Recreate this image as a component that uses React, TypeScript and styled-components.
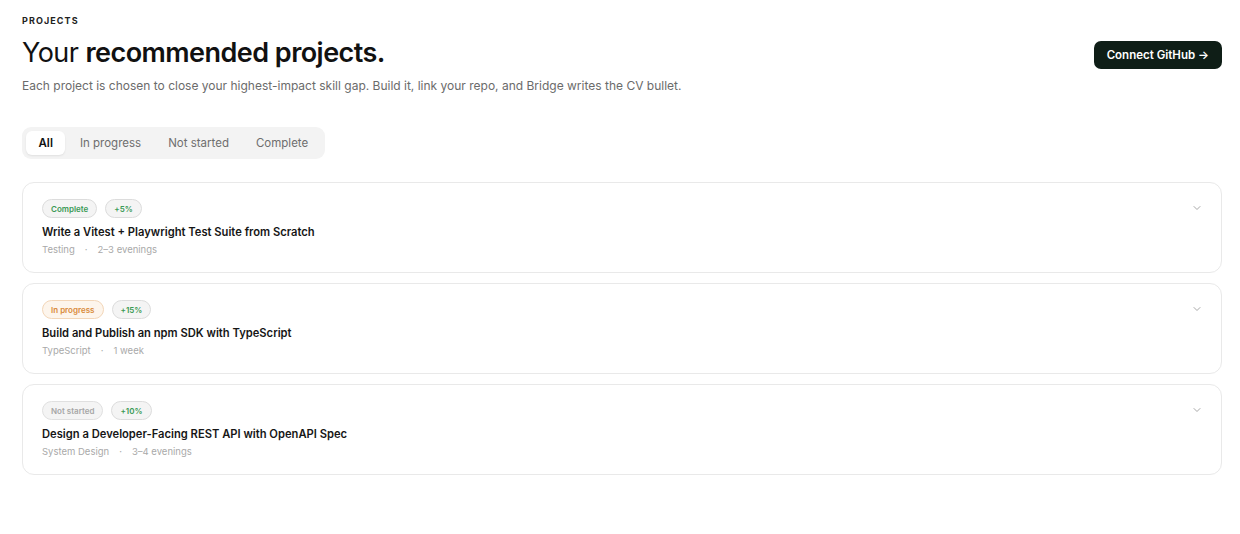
import React, { useState } from "react";
import styled, { createGlobalStyle } from "styled-components";

const GlobalStyle = createGlobalStyle`
  * { box-sizing: border-box; }
  body {
    margin: 0;
    background: #ffffff;
    font-family: Inter, "Noto Sans", sans-serif;
    color: #111;
  }
`;

type Status = "complete" | "progress" | "notStarted";

type Project = {
  title: string;
  status: Status;
  gain: string;
  area: string;
  effort: string;
};

const projects: Project[] = [
  {
    title: "Write a Vitest + Playwright Test Suite from Scratch",
    status: "complete",
    gain: "+5%",
    area: "Testing",
    effort: "2–3 evenings",
  },
  {
    title: "Build and Publish an npm SDK with TypeScript",
    status: "progress",
    gain: "+15%",
    area: "TypeScript",
    effort: "1 week",
  },
  {
    title: "Design a Developer-Facing REST API with OpenAPI Spec",
    status: "notStarted",
    gain: "+10%",
    area: "System Design",
    effort: "3–4 evenings",
  },
];

const statusStyles: Record<Status, { label: string; bg: string; border: string; color: string }> = {
  complete: { label: "Complete", bg: "#f4f4f4", border: "#dcdcdc", color: "#3a9a55" },
  progress: { label: "In progress", bg: "#fdf5ec", border: "#f3d6b8", color: "#d98a3a" },
  notStarted: { label: "Not started", bg: "#f4f4f4", border: "#e0e0e0", color: "#a6a6a6" },
};

const Page = styled.div`
  padding: 15px 18px 40px 22px;
`;

const Eyebrow = styled.div`
  font-size: 9px;
  font-weight: 700;
  letter-spacing: 0.12em;
  color: #222;
`;

const HeaderRow = styled.div`
  display: flex;
  justify-content: space-between;
  align-items: flex-start;
  margin-top: 9px;
`;

const Heading = styled.h1`
  margin: 0;
  font-size: 27px;
  font-weight: 400;
  letter-spacing: -0.02em;
  line-height: 36px;
  color: #111;

  strong {
    font-weight: 600;
  }
`;

const Subtitle = styled.p`
  margin: 7px 0 0;
  font-size: 12px;
  color: #6b6b6b;
`;

const GithubButton = styled.button`
  margin-top: 6px;
  height: 28px;
  padding: 0 13px;
  border: none;
  border-radius: 7px;
  background: #0f1e17;
  color: #fff;
  font-family: inherit;
  font-size: 11.5px;
  font-weight: 600;
  cursor: pointer;
`;

const Tabs = styled.div`
  display: inline-flex;
  gap: 2px;
  margin-top: 34px;
  padding: 4px;
  background: #f3f3f3;
  border-radius: 9px;
`;

const Tab = styled.button<{ $active: boolean }>`
  height: 24px;
  padding: 0 12.5px;
  border: none;
  border-radius: 6px;
  font-family: inherit;
  font-size: 11.5px;
  font-weight: ${({ $active }) => ($active ? 600 : 400)};
  color: ${({ $active }) => ($active ? "#111" : "#6e6e6e")};
  background: ${({ $active }) => ($active ? "#fff" : "transparent")};
  box-shadow: ${({ $active }) => ($active ? "0 1px 2px rgba(0,0,0,0.08)" : "none")};
  cursor: pointer;
`;

const List = styled.div`
  display: flex;
  flex-direction: column;
  gap: 10px;
  margin-top: 23px;
`;

const Card = styled.div`
  display: flex;
  justify-content: space-between;
  align-items: flex-start;
  height: 91px;
  padding: 16px 20px 0 19px;
  border: 1px solid #e9e9e9;
  border-radius: 12px;
  background: #fff;
`;

const Badges = styled.div`
  display: flex;
  gap: 8px;
`;

const Badge = styled.span<{ $bg: string; $border: string; $color: string }>`
  display: inline-flex;
  align-items: center;
  height: 19px;
  padding: 0 8px;
  border-radius: 10px;
  background: ${({ $bg }) => $bg};
  border: 1px solid ${({ $border }) => $border};
  color: ${({ $color }) => $color};
  font-size: 8px;
  font-weight: 600;
`;

const Title = styled.div`
  margin-top: 7px;
  font-size: 11.2px;
  font-weight: 600;
  color: #161616;
`;

const Meta = styled.div`
  margin-top: 5px;
  display: flex;
  gap: 10px;
  font-size: 9.5px;
  color: #a9a9a9;
`;

const Chevron = styled.svg`
  margin-top: 3px;
  margin-right: -2px;
`;

const tabs = ["All", "In progress", "Not started", "Complete"];

export default function App() {
  const [active, setActive] = useState("All");
  return (
    <Page>
      <GlobalStyle />
      <Eyebrow>PROJECTS</Eyebrow>
      <HeaderRow>
        <div>
          <Heading>
            Your <strong>recommended projects.</strong>
          </Heading>
          <Subtitle>
            Each project is chosen to close your highest-impact skill gap. Build it, link your repo, and Bridge
            writes the CV bullet.
          </Subtitle>
        </div>
        <GithubButton>Connect GitHub →</GithubButton>
      </HeaderRow>
      <Tabs>
        {tabs.map((t) => (
          <Tab key={t} $active={t === active} onClick={() => setActive(t)}>
            {t}
          </Tab>
        ))}
      </Tabs>
      <List>
        {projects.map((p) => {
          const s = statusStyles[p.status];
          return (
            <Card key={p.title}>
              <div>
                <Badges>
                  <Badge $bg={s.bg} $border={s.border} $color={s.color}>
                    {s.label}
                  </Badge>
                  <Badge $bg="#f4f4f4" $border="#dcdcdc" $color="#3a9a55">
                    {p.gain}
                  </Badge>
                </Badges>
                <Title>{p.title}</Title>
                <Meta>
                  <span>{p.area}</span>
                  <span>·</span>
                  <span>{p.effort}</span>
                </Meta>
              </div>
              <Chevron width="12" height="12" viewBox="0 0 24 24" fill="none" stroke="#a8a8a8" strokeWidth="2" strokeLinecap="round" strokeLinejoin="round">
                <path d="M6 9l6 6 6-6" />
              </Chevron>
            </Card>
          );
        })}
      </List>
    </Page>
  );
}
